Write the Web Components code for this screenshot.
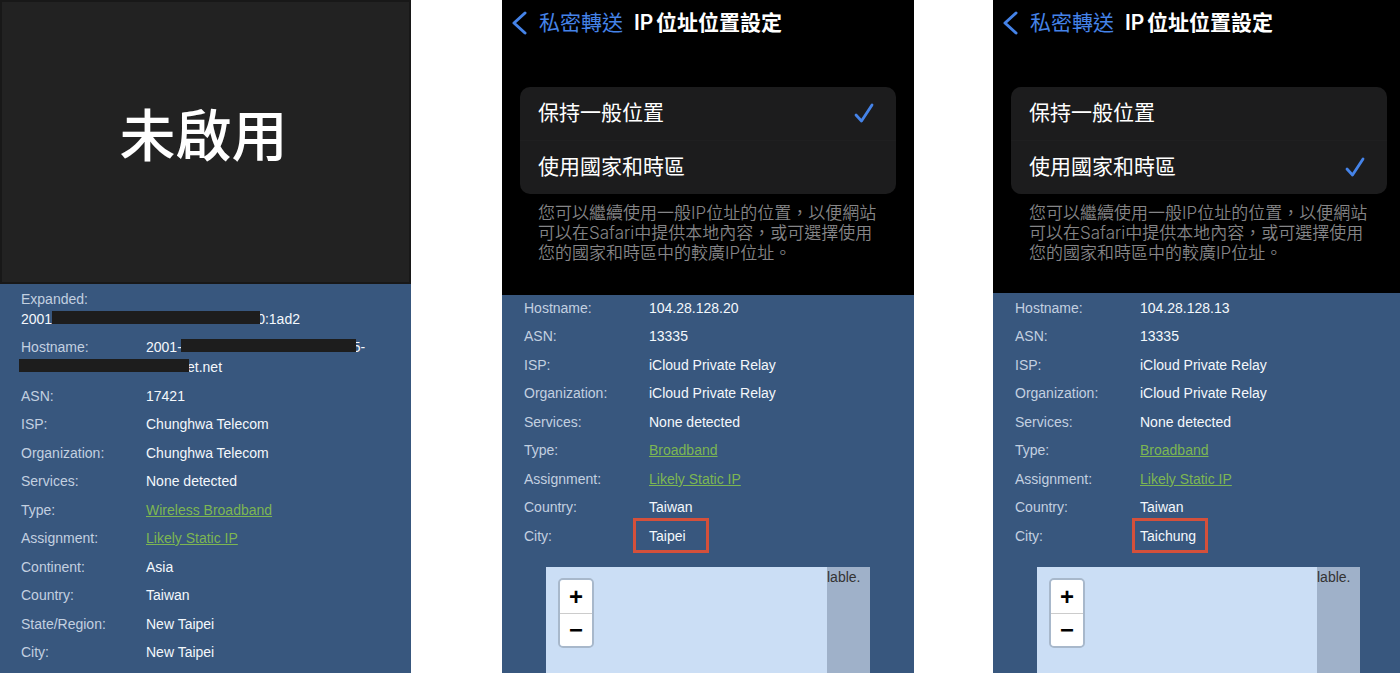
<!DOCTYPE html>
<html lang="zh-Hant">
<head>
<meta charset="utf-8">
<title>IP 位址位置設定</title>
<style>
  html, body { margin: 0; background: #fff; }
  body { font-family: "Liberation Sans", "Noto Sans CJK TC", sans-serif; font-size: 14px; line-height: 20px; }
</style>
</head>
<body>
<compare-board>
  <phone-panel>
    <status-cover>未啟用</status-cover>
    <ip-details id="off"></ip-details>
  </phone-panel>
  <phone-panel class="general">
    <relay-settings selected="general"></relay-settings>
    <ip-details id="general"></ip-details>
    <geo-map></geo-map>
  </phone-panel>
  <phone-panel class="country">
    <relay-settings selected="country"></relay-settings>
    <ip-details id="country"></ip-details>
    <geo-map></geo-map>
  </phone-panel>
</compare-board>

<script>
const define = (name, html, setup) => {
  const template = document.createElement('template');
  template.innerHTML = html;
  customElements.define(name, class extends HTMLElement {
    constructor() {
      super();
      this.attachShadow({ mode: 'open' }).append(template.content.cloneNode(true));
    }
    connectedCallback() { if (setup) setup(this, this.shadowRoot); }
  });
};

define('compare-board', `
  <style>
    :host { display: grid; grid-template-columns: 411fr 91fr 412fr 79fr 407fr; min-height: 100vh; }
    ::slotted(.general) { grid-column: 3; --inset-right: 18px; --map-right: 44px; --settings-bottom: 32px; }
    ::slotted(.country) { grid-column: 5; --inset-right: 13px; --map-right: 40px; --settings-bottom: 30px; --details-top: 2px; }
  </style>
  <slot></slot>`);

define('phone-panel', `
  <style>
    :host { display: flex; flex-direction: column; min-width: 0; background: #38577e; overflow: hidden; }
    ::slotted(geo-map) { flex: 1; }
  </style>
  <slot></slot>`);

define('status-cover', `
  <style>
    :host { display: block; box-sizing: border-box; padding: 90px 4px 110px 0; border: 2px solid #181818;
      background: #222; color: #fff; text-align: center; }
    h2 { margin: 0; font: 500 56px/80px "Noto Sans CJK TC", sans-serif; }
  </style>
  <h2><slot></slot></h2>`);

define('relay-settings', `
  <style>
    :host { display: block; background: #000; color: #fff; font-family: Inter, "Noto Sans CJK TC", sans-serif;
      padding-bottom: var(--settings-bottom); text-autospace: normal; }
    header { display: flex; align-items: center; height: 46px; padding-left: 10px; gap: 11px; }
    button { display: flex; align-items: center; gap: 11px; padding: 0; border: 0; background: none;
      color: #4583e8; font: inherit; font-size: 21px; line-height: 30px; white-space: nowrap; }
    h2 { margin: 0; font-size: 21px; line-height: 30px; font-weight: 600; white-space: nowrap; }
    fieldset { margin: 41px var(--inset-right) 9px 18px; padding: 0; border: 0; border-radius: 10px; background: #1c1c1d; min-width: 0; }
    label { display: flex; align-items: center; justify-content: space-between; box-sizing: border-box; height: 53px; padding: 0 22px 2px 18px;
      font-size: 21px; line-height: 30px; position: relative; }
    label + label { height: 54px; border-top: 1px solid #1f1f20; }
    input { position: absolute; opacity: 0; margin: 0; }
    label svg { visibility: hidden; }
    input:checked ~ svg { visibility: visible; }
    p { margin: 0; padding-left: 36px; color: #858587; font-size: 17px; line-height: 20px; font-weight: 350; white-space: nowrap; text-autospace: no-autospace; }
  </style>
  <header>
    <button type="button">
      <svg width="16" height="24" viewBox="0 0 16 24" fill="none" stroke="#4583e8" stroke-width="3" stroke-linecap="round" stroke-linejoin="round" aria-hidden="true"><path d="M13 2 2 12l11 10"/></svg>
      私密轉送</button>
    <h2>IP位址位置設定</h2>
  </header>
  <fieldset>
    <label><input type="radio" name="place" value="general"><span>保持一般位置</span>
      <svg width="20" height="20" viewBox="0 0 20 20" fill="none" stroke="#4583e8" stroke-width="2.8" stroke-linecap="round" stroke-linejoin="round" aria-hidden="true"><path d="M2 12 7.500 18 18 2"/></svg></label>
    <label><input type="radio" name="place" value="country"><span>使用國家和時區</span>
      <svg width="20" height="20" viewBox="0 0 20 20" fill="none" stroke="#4583e8" stroke-width="2.8" stroke-linecap="round" stroke-linejoin="round" aria-hidden="true"><path d="M2 12 7.500 18 18 2"/></svg></label>
  </fieldset>
  <p>您可以繼續使用一般IP位址的位置，以便網站<br>可以在Safari中提供本地內容，或可選擇使用<br>您的國家和時區中的較廣IP位址。</p>`,
  (host, root) => { root.querySelector(`[value=${host.getAttribute('selected')}]`).checked = true; });

const link = text => `<a href="#">${text}</a>`;
const relay = (ip, city) => [
  ['Hostname', ip], ['ASN', '13335'], ['ISP', 'iCloud Private Relay'], ['Organization', 'iCloud Private Relay'],
  ['Services', 'None detected'], ['Type', link('Broadband')], ['Assignment', link('Likely Static IP')],
  ['Country', 'Taiwan'], ['City', city]
];
const records = {
  off: [
    ['Expanded', null, '2001<i class="bar long"></i>0:1ad2'],
    ['Hostname', '2001-<i class="bar mid"></i>5-<br><i class="bar wrap"></i>et.net'],
    ['ASN', '17421'], ['ISP', 'Chunghwa Telecom'], ['Organization', 'Chunghwa Telecom'],
    ['Services', 'None detected'], ['Type', link('Wireless Broadband')], ['Assignment', link('Likely Static IP')],
    ['Continent', 'Asia'], ['Country', 'Taiwan'], ['State/Region', 'New Taipei'], ['City', 'New Taipei']
  ],
  general: relay('104.28.128.20', '<span class="mark">Taipei</span>'),
  country: relay('104.28.128.13', '<span class="mark near">Taichung</span>')
};

define('ip-details', `
  <style>
    :host { display: block; padding: var(--details-top, 0) 0 0 22px; }
    :host(#off) { padding: 2px 0 0 21px; }
    table { border-collapse: collapse; table-layout: fixed; width: 100%; }
    col.name { width: 125px; }
    th, td { padding: 4px 0; text-align: left; vertical-align: top; font-weight: 400; white-space: nowrap; }
    tr:nth-child(even) > * { padding-bottom: 5px; }
    tr:first-child > * { padding-top: 3px; }
    th { color: #c3d0e0; }
    td, b { color: #f4f8fc; font-weight: 400; }
    a { color: #7db652; text-decoration: underline; }
    .bar { display: inline-block; position: relative; height: 13px; background: #1d1d1d; }
    .long { width: 208px; margin-right: -3px; }
    .mid { width: 175px; margin: 0 -3px 0 -1px; }
    .wrap { width: 170px; margin-left: -127px; margin-right: -2px; }
    .mark { position: relative; }
    .mark::after { content: ""; position: absolute; left: -16px; top: -10px; width: 70px; height: 29px; border: 3px solid #d4503b; }
    .near::after { left: -8px; }
  </style>
  <table><colgroup><col class="name"><col></colgroup><tbody></tbody></table>`,
  (host, root) => {
    root.querySelector('tbody').innerHTML = records[host.id].map(([name, value, below]) =>
      value === null ? `<tr><th scope="row" colspan="2">${name}:<br><b>${below}</b></th></tr>`
                     : `<tr><th scope="row">${name}:</th><td>${value}</td></tr>`).join('');
  });

define('geo-map', `
  <style>
    :host { display: flex; margin: 17px var(--map-right) 0 44px; min-height: 106px; background: #9fb1c9; color: #333; }
    .tiles { flex: 1; background: #cbdef5; padding: 11px 0 0 12px; }
    .zoom { display: inline-flex; flex-direction: column; border: 2px solid #a8b8cb; border-radius: 5px; overflow: hidden; }
    button { display: flex; align-items: center; justify-content: center; width: 32px; height: 33px; padding: 0; border: 0; background: #fff; color: #000;
      font: 700 24px/30px "Liberation Sans", sans-serif; }
    button + button { border-top: 1px solid #ccc; }
    .note { width: 43px; }
  </style>
  <div class="tiles"><div class="zoom"><button type="button" aria-label="Zoom in">+</button><button type="button" aria-label="Zoom out">−</button></div></div>
  <div class="note">lable.</div>`);
</script>
</body>
</html>
